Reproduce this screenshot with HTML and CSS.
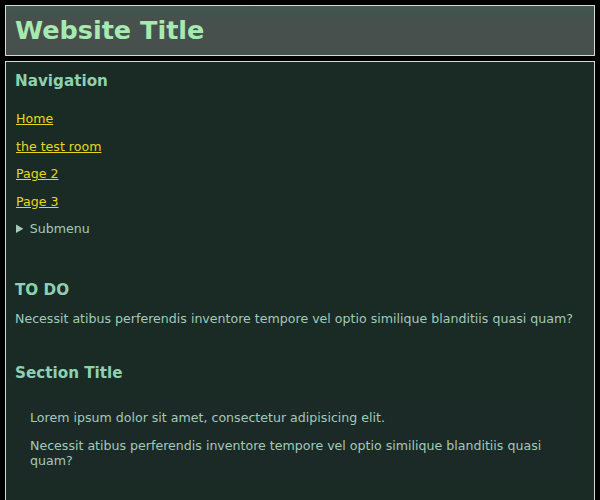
FILE: index.html
```html
<!DOCTYPE html>
<html>

<head>
    <meta charset="UTF-8">
    <title>Website Title</title>
    <link rel="stylesheet" href="styles.css">
</head>

<body>
    <header class="site-header">
        <h1>Website Title</h1>
    </header>
    <main class="site-main">
        <nav class="site-nav">
            <h2>Navigation</h2>
            <ul class="nav-list">
                <li><a href="#">Home</a></li>
                <li><a href="#">the test room</a></li>
                <li><a href="#">Page 2</a></li>
                <li><a href="#">Page 3</a></li>
                <li>
                    <details>
                        <summary>Submenu</summary>
                    </details>
                </li>
            </ul>
        </nav>
        <section class="section">
            <h2>TO DO</h2>
            <p>Necessit atibus perferendis inventore tempore vel optio similique blanditiis quasi quam?</p>
        </section>
        <section class="section">
            <h2>Section Title</h2>
            <div class="box">
                <p>Lorem ipsum dolor sit amet, consectetur adipisicing elit.</p>
                <p>Necessit atibus perferendis inventore tempore vel optio similique blanditiis quasi quam?</p>
            </div>
        </section>
    </main>
</body>

</html>
```

FILE: styles.css
```css
* {
    box-sizing: border-box;
}

body {
    margin: 5px;
    background: #000000;
    font-family: "DejaVu Sans", sans-serif;
    font-size: 12.6px;
    line-height: 15px;
    color: #a3c9b8;
}

.site-header {
    border: 1px solid #d8d8d8;
    background: linear-gradient(#3f5750, #47504c 30%);
    padding: 12px 9px 12px;
}

.site-header h1 {
    margin: 0;
    font-size: 25.5px;
    line-height: 25px;
    color: #a6eab2;
}

.site-main {
    margin-top: 5px;
    border: 1px solid #d8d8d8;
    background: #1a2b26;
    padding: 9px 9px 30px;
}

h2 {
    margin: 0;
    padding-top: 1px;
    font-size: 15.2px;
    line-height: 19px;
    color: #8fd0b0;
}

.nav-list {
    list-style: none;
    margin: 20px 0 0;
    padding: 0;
    display: flex;
    flex-direction: column;
    gap: 12.5px;
}

.nav-list a {
    color: #e6d81e;
    margin-left: 1px;
}

.nav-list summary {
    cursor: pointer;
    margin-left: 1px;
    color: #a3c9b8;
}

.nav-list summary::marker {
    font-size: 13px;
}

.section {
    margin-top: 44px;
}

.section h2 + p {
    margin: 11px 0 0;
}

.section:last-child {
    margin-top: 37px;
}

.box {
    margin: 17px 8px 0 0;
    padding: 10px 15px 12px;
    background: #1c2a27;
    display: flex;
    flex-direction: column;
    gap: 13px;
}

.box p {
    margin: 0;
}
```
